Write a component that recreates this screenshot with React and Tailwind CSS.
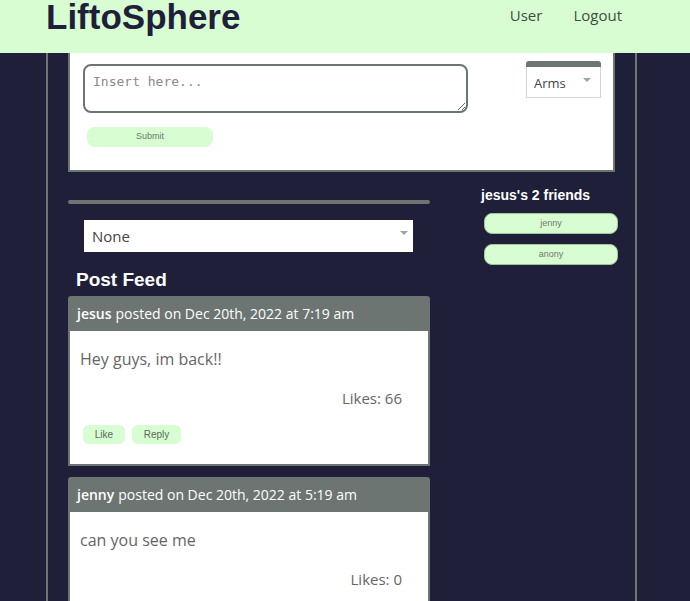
import React from "react";

const posts = [
    { user: "jesus", date: "Dec 20th, 2022 at 7:19 am", body: "Hey guys, im back!!", likes: 66 },
    { user: "jenny", date: "Dec 20th, 2022 at 5:19 am", body: "can you see me", likes: 0 },
];

const friends = ["jenny", "anony"];

const Caret = () => (
    <svg width="8" height="5" viewBox="0 0 8 5" className="absolute">
        <path d="M0 0h8L4 4z" fill="#9ca3af" />
    </svg>
);

const Post = ({ post }) => (
    <div className="w-[362px] rounded-t-[3px] overflow-hidden">
        <div className="flex h-[35px] items-center bg-[#6c7572] px-[9px] text-[14px] text-white">
            <span className="font-semibold">{post.user}</span>
            <span className="ml-[4px]">posted on {post.date}</span>
        </div>
        <div className="border-2 border-t-0 border-[#6c7572] bg-white">
            <p className="pl-[10px] pt-[16px] text-[16px] leading-[24px] text-[#666]">{post.body}</p>
            <p className="pr-[26px] pt-[15px] text-right text-[15px] leading-[24px] text-[#666]">
                Likes: {post.likes}
            </p>
            <div className="flex gap-[7px] pb-[20px] pl-[13px] pt-[15px]">
                <button className="h-[19px] w-[42px] rounded-md bg-[#d8fdd2] text-[10px] text-[#5b6b5b] [font-family:'Liberation_Sans',sans-serif]">
                    Like
                </button>
                <button className="h-[19px] w-[49px] rounded-md bg-[#d8fdd2] text-[10px] text-[#5b6b5b] [font-family:'Liberation_Sans',sans-serif]">
                    Reply
                </button>
            </div>
        </div>
    </div>
);

const App = () => {
    return (
        <div className="h-[601px] overflow-hidden bg-[#1f1f39] [font-family:'Open_Sans',sans-serif]">
            <header className="flex h-[53px] items-start justify-between bg-[#d8fdd2] pl-[46px] pr-[68px]">
                <h1 className="-mt-[1px] text-[35px] font-bold leading-[35px] text-[#1f1f39] [font-family:'Liberation_Sans',sans-serif]">
                    LiftoSphere
                </h1>
                <nav className="flex gap-[31px] pt-[4px] text-[15px] text-[#3d4d3d]">
                    <span>User</span>
                    <span>Logout</span>
                </nav>
            </header>

            <main className="ml-[46px] w-[591px] border-x-2 border-[#6c7572] px-[20px]">
                <div className="flex justify-between border-2 border-t-0 border-[#6c7572] bg-white pb-[23px] pl-[13px] pr-[12px] pt-[11px]">
                    <div>
                        <textarea
                            placeholder="Insert here..."
                            className="block h-[49px] w-[385px] resize-y rounded-lg border-2 border-[#6c7572] px-[8px] py-[6px] text-[13px] placeholder:text-[#8a8a8a] [font-family:'DejaVu_Sans_Mono',monospace]"
                        />
                        <button className="ml-[4px] mt-[14px] h-[20px] w-[126px] rounded-lg bg-[#d8fdd2] text-[9px] text-[#6b7b6b] [font-family:'Liberation_Sans',sans-serif]">
                            Submit
                        </button>
                    </div>
                    <div className="-mt-[3px] w-[75px]">
                        <div className="h-[6px] rounded-t-[3px] bg-[#6c7572]" />
                        <div className="relative flex h-[31px] items-center border border-t-0 border-[#d1d5db] pl-[7px] pt-[3px] text-[13px] text-[#444]">
                            Arms
                            <span className="absolute right-[17px] top-[11px]">
                                <Caret />
                            </span>
                        </div>
                    </div>
                </div>

                <div className="flex pt-[16px]">
                    <div className="w-[362px]">
                        <div className="mt-[12px] h-[4px] rounded-full bg-[#6c7572]" />
                        <div className="relative ml-[16px] mt-[16px] flex h-[32px] w-[329px] items-center bg-white pl-[8px] text-[15px] text-[#444]">
                            None
                            <span className="absolute right-[13px] top-[11px]">
                                <Caret />
                            </span>
                        </div>
                        <h2 className="ml-[8px] mt-[16px] text-[19px] font-bold leading-[24px] text-white [font-family:'Liberation_Sans',sans-serif]">
                            Post Feed
                        </h2>
                        <div className="mt-[4px] flex flex-col gap-[11px]">
                            {posts.map((p) => (
                                <Post key={p.user} post={p} />
                            ))}
                        </div>
                    </div>

                    <aside className="ml-[51px] w-[137px]">
                        <h3 className="-mt-[2px] text-[14px] font-bold leading-[18px] text-white [font-family:'Liberation_Sans',sans-serif]">
                            jesus's 2 friends
                        </h3>
                        <div className="mt-[9px] flex flex-col gap-[10px] pl-[3px]">
                            {friends.map((f) => (
                                <button
                                    key={f}
                                    className="h-[21px] w-[134px] rounded-lg border border-[#9fc49a] bg-[#d8fdd2] text-[9px] text-[#6b7b6b] [font-family:'Liberation_Sans',sans-serif]"
                                >
                                    {f}
                                </button>
                            ))}
                        </div>
                    </aside>
                </div>
            </main>
        </div>
    );
};

export default App;
